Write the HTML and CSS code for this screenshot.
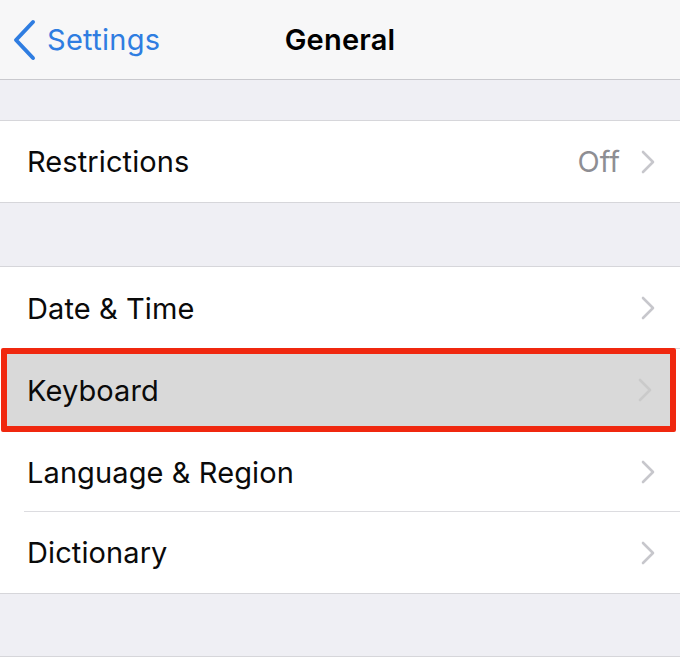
FILE: index.html
```html
<!DOCTYPE html>
<html>
<head>
<meta charset="utf-8">
<link rel="stylesheet" href="styles.css">
</head>
<body>
<div class="screen">
  <header class="nav">
    <div class="back">
      <svg class="back-chev" width="26" height="42" viewBox="0 0 26 42"><path d="M21 3 L4 21 L21 39" fill="none" stroke="#2f7de1" stroke-width="4" stroke-linecap="round" stroke-linejoin="round"/></svg>
      <span class="back-label">Settings</span>
    </div>
    <div class="title">General</div>
  </header>

  <div class="gap gap-top"></div>

  <section class="group">
    <div class="row">
      <span class="label">Restrictions</span>
      <span class="value">Off</span>
      <svg class="chev" width="16" height="26" viewBox="0 0 16 26"><path d="M3 3 L13 13 L3 23" fill="none" stroke="#c7c7cc" stroke-width="2.6" stroke-linecap="round" stroke-linejoin="round"/></svg>
    </div>
  </section>

  <div class="gap gap-mid"></div>

  <section class="group">
    <div class="row sep first">
      <span class="label">Date &amp; Time</span>
      <svg class="chev" width="16" height="26" viewBox="0 0 16 26"><path d="M3 3 L13 13 L3 23" fill="none" stroke="#c7c7cc" stroke-width="2.6" stroke-linecap="round" stroke-linejoin="round"/></svg>
    </div>
    <div class="row highlight">
      <span class="label">Keyboard</span>
      <svg class="chev" width="16" height="26" viewBox="0 0 16 26"><path d="M3 3 L13 13 L3 23" fill="none" stroke="#cacaca" stroke-width="2.6" stroke-linecap="round" stroke-linejoin="round"/></svg>
    </div>
    <div class="row sep">
      <span class="label">Language &amp; Region</span>
      <svg class="chev" width="16" height="26" viewBox="0 0 16 26"><path d="M3 3 L13 13 L3 23" fill="none" stroke="#c7c7cc" stroke-width="2.6" stroke-linecap="round" stroke-linejoin="round"/></svg>
    </div>
    <div class="row">
      <span class="label">Dictionary</span>
      <svg class="chev" width="16" height="26" viewBox="0 0 16 26"><path d="M3 3 L13 13 L3 23" fill="none" stroke="#c7c7cc" stroke-width="2.6" stroke-linecap="round" stroke-linejoin="round"/></svg>
    </div>
  </section>

  <div class="gap gap-bottom"></div>
  <section class="group tail"></section>
</div>
</body>
</html>
```

FILE: styles.css
```css
html, body {
  margin: 0;
  padding: 0;
  background: #efeff4;
}
.screen {
  width: 680px;
  height: 662px;
  overflow: hidden;
  font-family: Inter, "Liberation Sans", sans-serif;
  color: #0a0a0a;
  background: #efeff4;
}
.nav {
  height: 79px;
  background: #f7f7f8;
  border-bottom: 1px solid #c9c9ce;
  display: grid;
  grid-template-columns: 1fr auto 1fr;
  align-items: center;
}
.back {
  display: flex;
  align-items: center;
  gap: 9px;
  padding-left: 12px;
}
.back-chev {
  display: block;
}
.back-label {
  font-size: 29px;
  color: #2f7de1;
  letter-spacing: 0.3px;
}
.title {
  font-size: 29px;
  font-weight: 600;
  color: #000;
  letter-spacing: 0.2px;
}
.gap-top { height: 40px; }
.gap-mid { height: 63px; }
.gap-bottom { height: 62px; }
.group {
  background: #fff;
  border-top: 1px solid #d6d6da;
  border-bottom: 1px solid #d6d6da;
}
.tail {
  border-bottom: none;
  height: 10px;
}
.row {
  height: 81px;
  display: flex;
  align-items: center;
  padding: 0 24px 0 27px;
  position: relative;
  box-sizing: border-box;
}
.row.sep::after {
  content: "";
  position: absolute;
  left: 24px;
  right: 0;
  bottom: 0;
  height: 1px;
  background: #dcdce0;
}
.row.sep { height: 80px; }
.row.sep.first { height: 82px; }
.label {
  font-size: 29px;
  flex: 1;
  letter-spacing: 0.1px;
}
.value {
  font-size: 29px;
  color: #8e8e93;
  margin-right: 20px;
}
.chev {
  display: block;
}
.row.highlight {
  height: 84px;
  margin-top: -1px;
  margin-left: 1px;
  margin-right: 4px;
  background: #d9d9d9;
  border: 6px solid #f0280f;
  border-radius: 2px;
  padding: 0 17px 0 20px;
}
```
